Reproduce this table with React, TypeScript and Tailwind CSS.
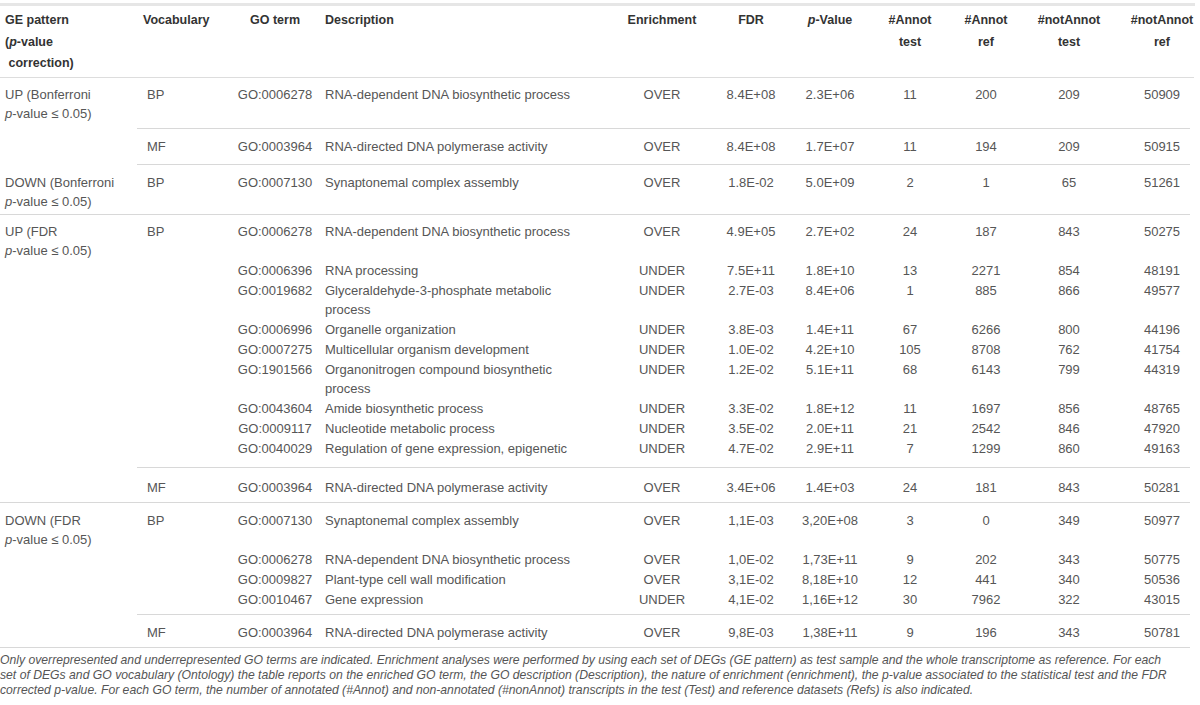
import type { ReactNode } from "react";

type Row = {
  ge?: ReactNode;
  cells: string[];
  border?: "full" | "partial";
  pad: string;
};

const widths = [
  "w-[93px] pl-[10px] text-left",
  "w-[90px] text-center",
  "w-[300px] pl-[5px] text-left",
  "w-[84px] text-center",
  "w-[94px] text-center",
  "w-[64px] text-center",
  "w-[96px] text-center",
  "w-[56px] text-center",
  "w-[110px] text-center",
  "w-[76px] text-center",
];

const pval = (
  <>
    <i>p</i>-value ≤ 0.05)
  </>
);

const rows: Row[] = [
  {
    ge: <>UP (Bonferroni<br />{pval}</>,
    cells: ["BP", "GO:0006278", "RNA-dependent DNA biosynthetic process", "OVER", "8.4E+08", "2.3E+06", "11", "200", "209", "50909"],
    pad: "pt-[7px] pb-[5px]",
  },
  {
    cells: ["MF", "GO:0003964", "RNA-directed DNA polymerase activity", "OVER", "8.4E+08", "1.7E+07", "11", "194", "209", "50915"],
    border: "partial",
    pad: "pt-[8px] pb-[8px]",
  },
  {
    ge: <>DOWN (Bonferroni<br />{pval}</>,
    cells: ["BP", "GO:0007130", "Synaptonemal complex assembly", "OVER", "1.8E-02", "5.0E+09", "2", "1", "65", "51261"],
    border: "partial",
    pad: "pt-[8px] pb-[3px]",
  },
  {
    ge: <>UP (FDR<br />{pval}</>,
    cells: ["BP", "GO:0006278", "RNA-dependent DNA biosynthetic process", "OVER", "4.9E+05", "2.7E+02", "24", "187", "843", "50275"],
    border: "full",
    pad: "pt-[7px]",
  },
  { cells: ["", "GO:0006396", "RNA processing", "UNDER", "7.5E+11", "1.8E+10", "13", "2271", "854", "48191"], pad: "pt-[1px]" },
  { cells: ["", "GO:0019682", "Glyceraldehyde-3-phosphate metabolic|process", "UNDER", "2.7E-03", "8.4E+06", "1", "885", "866", "49577"], pad: "pt-[1px]" },
  { cells: ["", "GO:0006996", "Organelle organization", "UNDER", "3.8E-03", "1.4E+11", "67", "6266", "800", "44196"], pad: "pt-[1px]" },
  { cells: ["", "GO:0007275", "Multicellular organism development", "UNDER", "1.0E-02", "4.2E+10", "105", "8708", "762", "41754"], pad: "pt-[1px]" },
  { cells: ["", "GO:1901566", "Organonitrogen compound biosynthetic|process", "UNDER", "1.2E-02", "5.1E+11", "68", "6143", "799", "44319"], pad: "pt-[1px]" },
  { cells: ["", "GO:0043604", "Amide biosynthetic process", "UNDER", "3.3E-02", "1.8E+12", "11", "1697", "856", "48765"], pad: "pt-[1px]" },
  { cells: ["", "GO:0009117", "Nucleotide metabolic process", "UNDER", "3.5E-02", "2.0E+11", "21", "2542", "846", "47920"], pad: "pt-[1px]" },
  { cells: ["", "GO:0040029", "Regulation of gene expression, epigenetic", "UNDER", "4.7E-02", "2.9E+11", "7", "1299", "860", "49163"], pad: "pt-[1px] pb-[9px]" },
  {
    cells: ["MF", "GO:0003964", "RNA-directed DNA polymerase activity", "OVER", "3.4E+06", "1.4E+03", "24", "181", "843", "50281"],
    border: "partial",
    pad: "pt-[10px] pb-[5px]",
  },
  {
    ge: <>DOWN (FDR<br />{pval}</>,
    cells: ["BP", "GO:0007130", "Synaptonemal complex assembly", "OVER", "1,1E-03", "3,20E+08", "3", "0", "349", "50977"],
    border: "full",
    pad: "pt-[8px]",
  },
  { cells: ["", "GO:0006278", "RNA-dependent DNA biosynthetic process", "OVER", "1,0E-02", "1,73E+11", "9", "202", "343", "50775"], pad: "pt-[1px]" },
  { cells: ["", "GO:0009827", "Plant-type cell wall modification", "OVER", "3,1E-02", "8,18E+10", "12", "441", "340", "50536"], pad: "pt-[1px]" },
  { cells: ["", "GO:0010467", "Gene expression", "UNDER", "4,1E-02", "1,16E+12", "30", "7962", "322", "43015"], pad: "pt-[1px] pb-[5px]" },
  {
    cells: ["MF", "GO:0003964", "RNA-directed DNA polymerase activity", "OVER", "9,8E-03", "1,38E+11", "9", "196", "343", "50781"],
    border: "partial",
    pad: "pt-[8px] pb-[5px]",
  },
];

const Cell = ({ i, text }: { i: number; text: string }) => {
  const parts = text.split("|");
  return (
    <div className={`${widths[i]} shrink-0 whitespace-nowrap`}>
      {parts.map((p, k) => (
        <div key={k}>{p || "\u00a0"}</div>
      ))}
    </div>
  );
};

const App = () => {
  return (
    <div className="w-[1200px] bg-white font-['Liberation_Sans',Arial,sans-serif] overflow-hidden">
      <div className="pt-[3px]">
        <div className="w-[1195px] h-[3px] bg-[#e6e6e6]" />
      </div>

      {/* header */}
      <div className="flex w-[1194px] h-[72px] pt-[4px] border-b border-[#dddddd] text-[12.5px] font-bold leading-[21.5px] text-[#333333]">
        <div className="w-[137px] shrink-0 pl-[5px]">
          GE pattern
          <br />(<i>p</i>-value
          <br />
          &nbsp;correction)
        </div>
        <div className="w-[93px] shrink-0 pl-[6px]">Vocabulary</div>
        <div className="w-[90px] shrink-0 text-center">GO term</div>
        <div className="w-[300px] shrink-0 pl-[5px]">Description</div>
        <div className="w-[84px] shrink-0 text-center">Enrichment</div>
        <div className="w-[94px] shrink-0 text-center">FDR</div>
        <div className="w-[64px] shrink-0 text-center">
          <i>p</i>-Value
        </div>
        <div className="w-[96px] shrink-0 text-center">
          #Annot
          <br />
          test
        </div>
        <div className="w-[56px] shrink-0 text-center">
          #Annot
          <br />
          ref
        </div>
        <div className="w-[110px] shrink-0 text-center">
          #notAnnot
          <br />
          test
        </div>
        <div className="w-[76px] shrink-0 text-center whitespace-nowrap">
          #notAnnot
          <br />
          ref
        </div>
      </div>

      {/* body */}
      <div className="w-[1190px] text-[13px] leading-[19px] text-[#565656] border-b border-[#d8d8d8]">
        {rows.map((r, idx) => (
          <div
            key={idx}
            className={`flex ${r.border === "full" ? "border-t border-[#d8d8d8]" : ""}`}
          >
            <div className={`w-[137px] shrink-0 pl-[5px] whitespace-nowrap ${r.border === "partial" ? "border-t border-transparent" : ""} ${r.pad}`}>
              {r.ge}
            </div>
            <div
              className={`flex w-[1053px] shrink-0 ${r.border === "partial" ? "border-t border-[#d8d8d8]" : ""} ${r.pad}`}
            >
              {r.cells.map((c, i) => (
                <Cell key={i} i={i} text={c} />
              ))}
            </div>
          </div>
        ))}
      </div>

      {/* footnote */}
      <p className="mt-[5px] w-[1195px] text-[12.2px] leading-[15px] italic text-[#555555] whitespace-nowrap">
        Only overrepresented and underrepresented GO terms are indicated. Enrichment analyses were performed by using each set of DEGs (GE pattern) as test sample and the whole transcriptome as reference. For each
        <br />
        set of DEGs and GO vocabulary (Ontology) the table reports on the enriched GO term, the GO description (Description), the nature of enrichment (enrichment), the p-value associated to the statistical test and the FDR
        <br />
        corrected p-value. For each GO term, the number of annotated (#Annot) and non-annotated (#nonAnnot) transcripts in the test (Test) and reference datasets (Refs) is also indicated.
      </p>
    </div>
  );
};

export default App;
